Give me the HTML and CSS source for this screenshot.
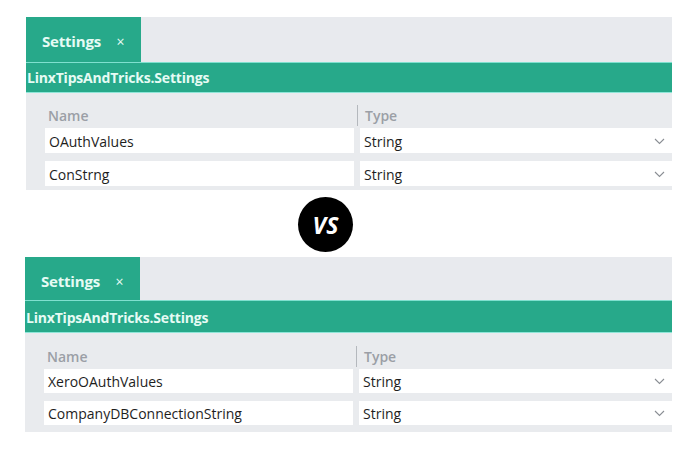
FILE: index.html
```html
<!DOCTYPE html>
<html>
<head>
<meta charset="utf-8">
<link rel="stylesheet" href="styles.css">
</head>
<body>
<div class="page">
  <section class="panel panel-a">
    <div class="tabstrip">
      <div class="tab">Settings <span class="close">×</span></div>
    </div>
    <div class="header">LinxTipsAndTricks.Settings</div>
    <div class="body">
      <div class="grid">
        <div class="colhead name">Name</div>
        <div class="colhead type"><span class="sep"></span>Type</div>
        <div class="cell">OAuthValues</div>
        <div class="cell select">String<svg class="chev" width="11" height="7" viewBox="0 0 11 7"><path d="M1 1 L5.5 5.5 L10 1" fill="none" stroke="#8a8e94" stroke-width="1.1"/></svg></div>
        <div class="cell">ConStrng</div>
        <div class="cell select">String<svg class="chev" width="11" height="7" viewBox="0 0 11 7"><path d="M1 1 L5.5 5.5 L10 1" fill="none" stroke="#8a8e94" stroke-width="1.1"/></svg></div>
      </div>
    </div>
  </section>

  <div class="vs-row"><div class="vs">VS</div></div>

  <section class="panel panel-b">
    <div class="tabstrip">
      <div class="tab">Settings <span class="close">×</span></div>
    </div>
    <div class="header">LinxTipsAndTricks.Settings</div>
    <div class="body">
      <div class="grid">
        <div class="colhead name">Name</div>
        <div class="colhead type"><span class="sep"></span>Type</div>
        <div class="cell">XeroOAuthValues</div>
        <div class="cell select">String<svg class="chev" width="11" height="7" viewBox="0 0 11 7"><path d="M1 1 L5.5 5.5 L10 1" fill="none" stroke="#8a8e94" stroke-width="1.1"/></svg></div>
        <div class="cell">CompanyDBConnectionString</div>
        <div class="cell select">String<svg class="chev" width="11" height="7" viewBox="0 0 11 7"><path d="M1 1 L5.5 5.5 L10 1" fill="none" stroke="#8a8e94" stroke-width="1.1"/></svg></div>
      </div>
    </div>
  </section>
</div>
</body>
</html>
```

FILE: styles.css
```css
* { box-sizing: border-box; }
html, body { margin: 0; padding: 0; background: #ffffff; }
body {
  width: 696px;
  height: 453px;
  overflow: hidden;
  font-family: "Open Sans", "Noto Sans", sans-serif;
  color: #1e1e1e;
}
.page {
  display: flex;
  flex-direction: column;
  padding-top: 17px;
}
.panel {
  width: 646px;
  display: flex;
  flex-direction: column;
}
.panel-a { margin-left: 26px; }
.panel-b { margin-left: 25px; width: 647px; }

.tabstrip {
  height: 45px;
  background: #e8eaee;
  display: flex;
}
.panel-b .tabstrip { height: 43px; }
.tab {
  width: 115px;
  background: #27a98a;
  color: #e6fbf4;
  font-weight: 700;
  font-size: 15px;
  padding: 14px 0 0 16px;
  letter-spacing: -0.2px;
}
.close {
  font-weight: 400;
  font-size: 14px;
  margin-left: 12px;
}
.header {
  height: 31px;
  background: #27a98a;
  border-top: 1px solid #7fe0cf;
  border-bottom: 1px solid #8fe6d8;
  color: #e6fbf4;
  font-weight: 700;
  font-size: 14px;
  padding: 5px 0 0 1px;
  letter-spacing: -0.2px;
}
.panel-b .header { height: 33px; padding-top: 7px; }
.body {
  background: #e9ebee;
  padding: 11px 0 4px 19px;
}
.panel-b .body { padding-top: 12px; padding-bottom: 7px; }
.grid {
  display: grid;
  grid-template-columns: 309px 1fr;
  column-gap: 6px;
  row-gap: 8px;
}
.colhead {
  height: 24px;
  margin-bottom: -8px;
  font-size: 14px;
  font-weight: 600;
  color: #9b9fa6;
  padding: 2px 0 0 3px;
  position: relative;
}
.colhead.type { padding-left: 5px; }
.sep {
  position: absolute;
  left: -3px;
  top: 1px;
  height: 21px;
  border-left: 1px solid #b4b8bd;
}
.cell {
  height: 25px;
  background: #ffffff;
  font-size: 14px;
  padding: 4px 0 0 4px;
  letter-spacing: 0;
  display: flex;
  align-items: flex-start;
}
.panel-b .cell { height: 24px; padding-top: 3px; }
.select { justify-content: space-between; padding-right: 7px; }
.chev { margin-top: 6px; }

.vs-row {
  height: 67px;
  padding-top: 7px;
  padding-left: 298px;
}
.vs {
  width: 55px;
  height: 55px;
  border-radius: 50%;
  background: #000;
  color: #fff;
  font-family: "Open Sans", "Noto Sans", sans-serif;
  font-style: italic;
  font-weight: 700;
  font-size: 23px;
  display: flex;
  align-items: center;
  justify-content: center;
  letter-spacing: 0;
}
```
